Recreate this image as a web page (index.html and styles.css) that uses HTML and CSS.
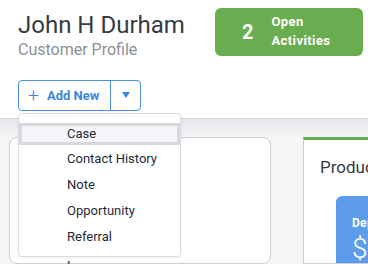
FILE: index.html
```html
<!DOCTYPE html>
<html lang="en">

<head>
  <meta charset="UTF-8" />
  <meta name="viewport" content="width=device-width, initial-scale=1.0" />
  <title>Customer Profile</title>
  <link rel="stylesheet" href="styles.css">
</head>

<body>
  <!-- Header -->
  <div class="header">
    <div class="title">
      <h1>John H Durham</h1>
      <p>Customer Profile</p>

      <div class="split-btn">
        <button class="add-btn"><span class="plus">+</span> Add New</button>
        <button class="caret-btn"><span class="caret"></span></button>
      </div>

      <!-- Add New menu -->
      <ul class="menu">
        <li class="active">Case</li>
        <li>Contact History</li>
        <li>Note</li>
        <li>Opportunity</li>
        <li>Referral</li>
      </ul>
    </div>

    <div class="activities">
      <span class="count">2</span>
      <span class="label">Open<br>Activities</span>
    </div>
  </div>

  <!-- Content -->
  <div class="content">
    <div class="card left-card">
      <div class="peek">I</div>
    </div>

    <div class="card products">
      <h2>Products</h2>
      <div class="tile">
        <div class="tile-title">Deposits</div>
        <div class="tile-value">$1,250</div>
      </div>
    </div>
  </div>
</body>

</html>
```

FILE: styles.css
```css
* {
  box-sizing: border-box;
  margin: 0;
  padding: 0;
  font-family: Roboto, 'Liberation Sans', sans-serif;
}

body {
  width: 368px;
  height: 264px;
  overflow: hidden;
  background-color: #f4f5f7;
}

/* Header */
.header {
  height: 118px;
  background-color: white;
  display: flex;
  justify-content: space-between;
  align-items: flex-start;
  padding: 0 5px 0 18px;
}

.title {
  position: relative;
}

.title h1 {
  margin-top: 12px;
  font-size: 24px;
  line-height: 27px;
  font-weight: 400;
  color: #353b45;
}

.title p {
  margin-top: 1px;
  font-size: 16px;
  line-height: 20px;
  color: #8b909a;
}

/* Split button */
.split-btn {
  display: flex;
  margin-top: 20px;
  width: 123px;
  height: 31px;
  border: 1px solid #4a8fdf;
  border-radius: 4px;
  background-color: white;
}

.split-btn button {
  background: none;
  border: none;
  color: #3b87df;
  cursor: pointer;
}

.add-btn {
  width: 92px;
  border-right: 1px solid #4a8fdf !important;
  font-size: 13px;
  font-weight: 700;
  text-align: left;
  padding-left: 9px;
}

.add-btn .plus {
  font-size: 19px;
  font-weight: 300;
  vertical-align: -2px;
  margin-right: 5px;
}

.caret-btn {
  flex: 1;
  display: flex;
  align-items: center;
  justify-content: center;
}

.caret {
  width: 0;
  height: 0;
  border-left: 4px solid transparent;
  border-right: 4px solid transparent;
  border-top: 6px solid #3b87df;
  margin-bottom: 2px;
}

/* Menu */
.menu {
  position: absolute;
  top: 113px;
  left: 0;
  width: 163px;
  padding: 6px 0;
  list-style: none;
  background-color: white;
  border: 1px solid #dadce1;
  border-radius: 4px;
  box-shadow: 0 1px 3px rgba(0, 0, 0, 0.06);
  z-index: 10;
}

.menu li {
  height: 26px;
  line-height: 26px;
  padding-left: 48px;
  font-size: 13px;
  color: #262a38;
}

.menu li.active {
  background-color: #f5f6f9;
  box-shadow: inset 0 0 0 3px #d8d9dc;
  line-height: 22px;
  height: 22px;
  margin: 3px 0 1px;
}

/* Open activities */
.activities {
  margin-top: 8px;
  width: 148px;
  height: 48px;
  background-color: #6aac50;
  border-radius: 6px;
  display: flex;
  align-items: center;
  padding-left: 27px;
  color: white;
}

.activities .count {
  font-size: 20px;
  font-weight: 700;
  margin-right: 18px;
}

.activities .label {
  font-size: 13px;
  line-height: 19px;
  font-weight: 700;
  letter-spacing: 0.4px;
  margin-top: -2px;
}

/* Content */
.content {
  height: 146px;
  border-top: 1px solid #d6d9df;
  background: linear-gradient(#e5e6e9, #f4f5f7 18px);
  display: flex;
  gap: 32px;
  padding: 18px 0 0 9px;
}

.card {
  background-color: white;
  border: 1px solid #cbcfd8;
}

.left-card {
  width: 262px;
  border-radius: 8px;
  padding: 120px 0 0 57px;
}

.peek {
  font-size: 13px;
  line-height: 16px;
  color: #262a38;
}

.products {
  flex: 1;
  border-top: 3px solid #6aac50;
  border-right: none;
  padding: 17px 0 0 16px;
  white-space: nowrap;
  overflow: hidden;
}

.products h2 {
  font-size: 17px;
  line-height: 20px;
  font-weight: 400;
  color: #353b45;
}

.tile {
  margin: 19px 0 0 16px;
  width: 140px;
  height: 90px;
  background-color: #5d9ce8;
  border-radius: 6px;
  padding: 20px 0 0 16px;
  color: white;
}

.tile-title {
  font-size: 12px;
  font-weight: 700;
  letter-spacing: 0.3px;
}

.tile-value {
  margin-top: 2px;
  font-size: 28px;
  font-weight: 300;
}
```
